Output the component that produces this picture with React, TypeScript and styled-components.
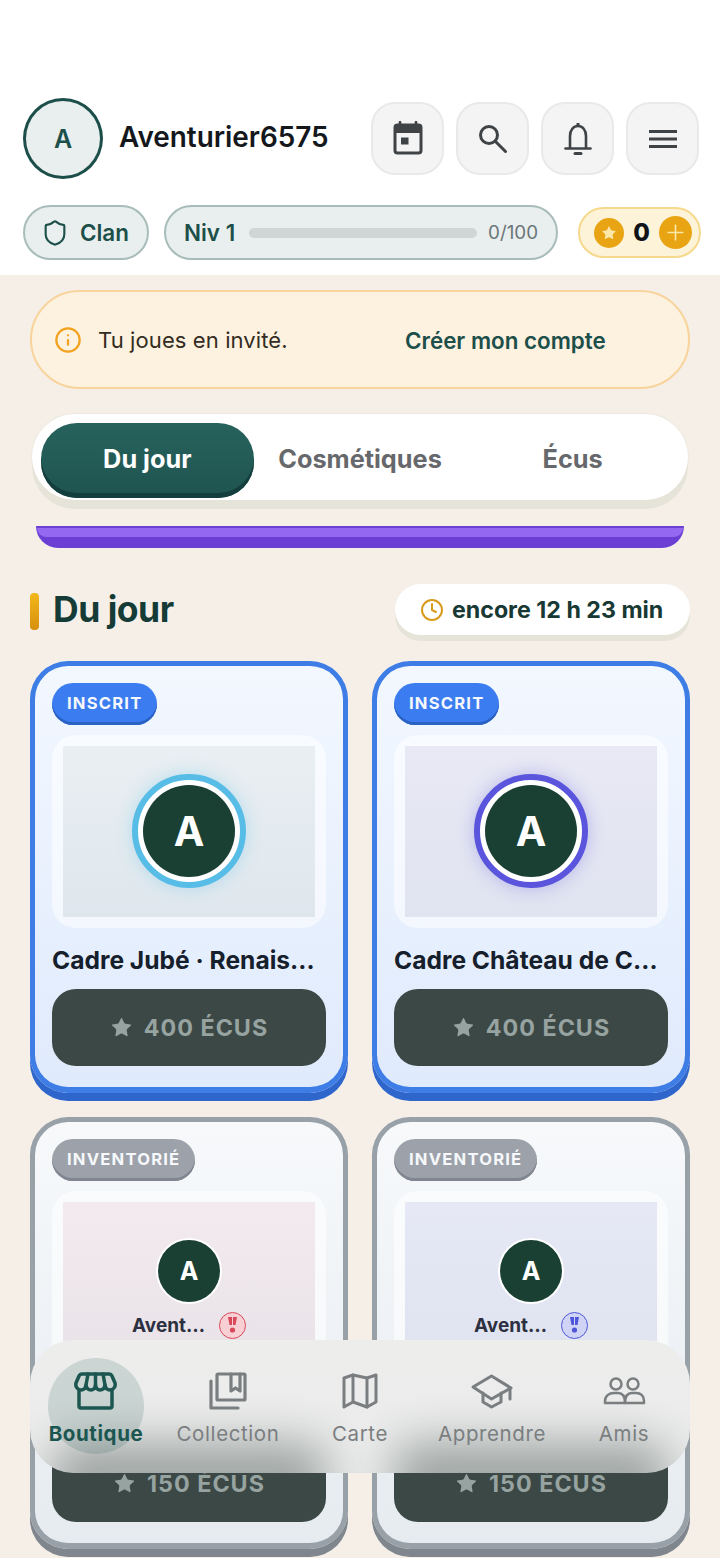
import styled, { createGlobalStyle } from "styled-components";
import { Shield, Star, Plus, Info, Clock } from "lucide-react";

const GlobalStyle = createGlobalStyle`
  html, body {
    margin: 0;
    padding: 0;
    background: #f5efe8;
    font-family: Inter, "Noto Sans", sans-serif;
  }
  * { box-sizing: border-box; }
  #root { height: 1558px; overflow: hidden; }
`;

const Page = styled.div`
  position: relative;
  width: 720px;
  height: 1558px;
  overflow: hidden;
  background: #f5efe8;
`;

const Header = styled.header`
  background: #fff;
  height: 275px;
  padding: 98px 19px 0 23px;
  display: flex;
  flex-direction: column;
  gap: 26px;
`;

const TopRow = styled.div`
  display: flex;
  align-items: center;
  height: 81px;
  padding-right: 2px;
`;

const Avatar = styled.div`
  width: 80px;
  height: 81px;
  border-radius: 50%;
  border: 3px solid #1c4f49;
  background: #e9eeee;
  color: #1c4f49;
  display: flex;
  align-items: center;
  justify-content: center;
  font-size: 25px;
  font-weight: 600;
`;

const UserName = styled.div`
  margin-left: 16px;
  font-size: 27.9px;
  font-weight: 600;
  color: #14181c;
  flex: 1;
  margin-top: -3px;
`;

const IconButtons = styled.div`
  display: flex;
  gap: 12px;
`;

const IconButton = styled.div`
  width: 73px;
  height: 73px;
  border-radius: 24px;
  background: #f4f4f4;
  border: 2px solid #e9e9e9;
  display: flex;
  align-items: center;
  justify-content: center;
  color: #3f4345;
`;

const StatusRow = styled.div`
  display: flex;
  align-items: center;
`;

const Pill = styled.div`
  height: 55px;
  border-radius: 28px;
  background: #e9eeee;
  border: 2px solid #a8bdb9;
  display: flex;
  align-items: center;
  color: #1c4f49;
  font-size: 22.4px;
  font-weight: 600;
`;

const ClanPill = styled(Pill)`
  width: 126px;
  padding-left: 16px;
  gap: 11px;
`;

const LevelPill = styled(Pill)`
  width: 394px;
  margin-left: 15px;
  padding: 0 18px;
`;

const Track = styled.div`
  flex: 1;
  height: 10px;
  border-radius: 5px;
  background: #cfd6d6;
  margin: 0 11px 0 14px;
`;

const LevelCount = styled.span`
  font-size: 18.8px;
  font-weight: 400;
  color: #6c7678;
`;

const CoinPill = styled.div`
  margin-left: 20px;
  width: 123px;
  height: 51px;
  border-radius: 26px;
  background: #fdf3d8;
  border: 2px solid #f6d98c;
  display: flex;
  align-items: center;
  justify-content: space-between;
  padding: 0 7px 0 14px;
  font-size: 24px;
  font-weight: 800;
  color: #101418;
`;

const CoinDot = styled.span<{ $size: number }>`
  width: ${(p) => p.$size}px;
  height: ${(p) => p.$size}px;
  border-radius: 50%;
  background: #e8a412;
  display: flex;
  align-items: center;
  justify-content: center;
  color: #fbe7a8;
`;

const Content = styled.main`
  padding: 15px 30px 0;
`;

const Banner = styled.div`
  height: 99px;
  border-radius: 50px;
  background: #fdf1df;
  border: 2px solid #f8d49c;
  display: flex;
  align-items: center;
  padding: 1px 0 0 22px;
  color: #f3a21f;
`;

const BannerText = styled.span`
  margin-left: 16px;
  font-size: 22px;
  font-weight: 400;
  letter-spacing: 0.1px;
  color: #332c22;
  width: 307px;
`;

const BannerLink = styled.span`
  font-size: 22.4px;
  font-weight: 600;
  color: #1c4f49;
`;

const Tabs = styled.div`
  margin: 25px 2px 0;
  height: 86px;
  border-radius: 43px;
  background: #fff;
  box-shadow: 0 9px 0 #e6e4d8, 0 0 0 1px #ece9e0;
  display: flex;
  padding: 9px;
`;

const Tab = styled.div<{ $active?: boolean }>`
  flex: 1;
  height: 75px;
  padding-bottom: 4px;
  border-radius: 36px;
  display: flex;
  align-items: center;
  justify-content: center;
  font-size: 25.3px;
  font-weight: 700;
  color: ${(p) => (p.$active ? "#fff" : "#66686b")};
  background: ${(p) => (p.$active ? "linear-gradient(#27625d, #1f5450)" : "transparent")};
  box-shadow: ${(p) => (p.$active ? "inset 0 -5px 0 #143e3d" : "none")};
`;

const PurpleStrip = styled.div`
  margin: 26px 6px 0;
  height: 22px;
  background: #6c3fd4;
  border-radius: 0 0 24px 24px;
  overflow: hidden;
  padding: 2px 1px 0;
`;

const PurpleGlow = styled.div`
  height: 9px;
  background: #9468f0;
  border-radius: 0 0 18px 18px;
`;

const SectionHead = styled.div`
  margin-top: 33px;
  height: 57px;
  display: flex;
  align-items: center;
  justify-content: space-between;
`;

const SectionTitle = styled.h2`
  margin: 0;
  display: flex;
  align-items: center;
  gap: 14px;
  font-size: 35.5px;
  font-weight: 700;
  letter-spacing: -0.5px;
  color: #153b36;
`;

const TitleBar = styled.span`
  width: 9px;
  height: 37px;
  margin-top: 4px;
  border-radius: 4px;
  background: linear-gradient(#f3b81c, #d78f0c);
`;

const Timer = styled.div`
  width: 295px;
  height: 51px;
  border-radius: 26px;
  background: #fff;
  box-shadow: 0 6px 0 #e6e4d8;
  display: flex;
  align-items: center;
  gap: 8px;
  padding-left: 25px;
  font-size: 23.2px;
  font-weight: 700;
  color: #173833;
`;

const Grid = styled.div`
  margin-top: 23px;
  display: grid;
  grid-template-columns: 318px 318px;
  column-gap: 24px;
  row-gap: 24px;
`;

const Card = styled.article<{ $tone: "blue" | "grey" }>`
  height: 432px;
  border-radius: 38px;
  border: 5px solid ${(p) => (p.$tone === "blue" ? "#3d7de5" : "#98a0a8")};
  border-bottom-width: 6px;
  padding: 17px 17px 0;
  background: ${(p) =>
    p.$tone === "blue"
      ? "linear-gradient(#f3f8ff, #dfeafc)"
      : "linear-gradient(#f7f9fb, #e6ebf0)"};
  box-shadow: 0 8px 0 ${(p) => (p.$tone === "blue" ? "#2f66cc" : "#7f868e")};
  overflow: hidden;
`;

const Badge = styled.div<{ $tone: "blue" | "grey" }>`
  display: flex;
  width: fit-content;
  align-items: center;
  height: 42px;
  border-radius: 21px;
  padding: 0 15px 3px;
  font-size: 16.6px;
  font-weight: 700;
  letter-spacing: 1.2px;
  color: #f6f8fb;
  background: ${(p) => (p.$tone === "blue" ? "#3b7df0" : "#9da2aa")};
  box-shadow: inset 0 -3px 0 ${(p) => (p.$tone === "blue" ? "#2a62c4" : "#7f8690")};
`;

const PreviewFrame = styled.div`
  margin-top: 10px;
  height: 193px;
  border-radius: 24px;
  background: rgba(255, 255, 255, 0.55);
  padding: 11px;
`;

const Preview = styled.div<{ $from: string; $to: string }>`
  height: 171px;
  padding-bottom: 1px;
  background: linear-gradient(${(p) => p.$from}, ${(p) => p.$to});
  display: flex;
  flex-direction: column;
  align-items: center;
  justify-content: center;
`;

const FramedAvatar = styled.div<{ $ring: string }>`
  width: 114px;
  height: 114px;
  border-radius: 50%;
  background: #fff;
  border: 6px solid ${(p) => p.$ring};
  box-shadow: 0 0 18px ${(p) => p.$ring}55;
  display: flex;
  align-items: center;
  justify-content: center;
`;

const AvatarDisc = styled.div<{ $size: number; $font: number }>`
  width: ${(p) => p.$size}px;
  height: ${(p) => p.$size}px;
  border-radius: 50%;
  background: #1a3f33;
  color: #fff;
  display: flex;
  align-items: center;
  justify-content: center;
  font-size: ${(p) => p.$font}px;
  font-weight: 700;
`;

const SmallAvatar = styled.div`
  margin-top: 2px;
  padding: 2px;
  border-radius: 50%;
  background: #fff;
`;

const NameRow = styled.div`
  margin-top: 8px;
  display: flex;
  align-items: center;
  gap: 14px;
  font-size: 19px;
  font-weight: 700;
  color: #2c2f40;
`;

const Medal = styled.span<{ $color: string; $fill: string }>`
  width: 27px;
  height: 27px;
  border-radius: 50%;
  border: 1.5px solid ${(p) => p.$color};
  background: ${(p) => p.$fill};
  color: ${(p) => p.$color};
  display: flex;
  align-items: center;
  justify-content: center;
`;

const CardTitle = styled.div`
  margin-top: 17px;
  font-size: 24.6px;
  line-height: 30px;
  font-weight: 700;
  color: #16202c;
  white-space: nowrap;
`;

const PriceButton = styled.div`
  margin-top: 14px;
  height: 77px;
  border-radius: 24px;
  background: #3c4845;
  color: #97a3a0;
  display: flex;
  align-items: center;
  justify-content: center;
  gap: 11px;
  font-size: 23.3px;
  font-weight: 700;
  letter-spacing: 1px;
`;

const BottomNav = styled.nav`
  position: absolute;
  left: 30px;
  top: 1340px;
  width: 660px;
  height: 133px;
  border-radius: 44px;
  background: linear-gradient(#edeeec, #e9eaea);
  overflow: hidden;
  display: grid;
  grid-template-columns: repeat(5, 132px);
`;

/* the dark price buttons seen through the frosted bar */
const NavShade = styled.span<{ $left: number }>`
  position: absolute;
  left: ${(p) => p.$left}px;
  top: 102px;
  width: 274px;
  height: 70px;
  border-radius: 24px;
  background: #3c4845;
  opacity: 0.42;
  filter: blur(22px);
`;

const NavItem = styled.div<{ $active?: boolean }>`
  position: relative;
  display: flex;
  flex-direction: column;
  align-items: center;
  padding-top: 28px;
  gap: 9px;
  color: ${(p) => (p.$active ? "#1c5650" : "#7a7e80")};
  font-size: 20.5px;
  font-weight: ${(p) => (p.$active ? 700 : 400)};
  letter-spacing: 0.6px;
`;

const NavGlow = styled.span`
  position: absolute;
  left: 18px;
  top: 18px;
  width: 96px;
  height: 96px;
  border-radius: 50%;
  background: rgba(28, 86, 80, 0.16);
`;

const NavIcon = styled.svg`
  position: relative;
  width: 44px;
  height: 44px;
  fill: none;
  stroke: currentColor;
  stroke-linejoin: round;
  stroke-linecap: round;
`;

const NavLabel = styled.span`
  position: relative;
`;

const items = [
  {
    tone: "blue" as const,
    badge: "INSCRIT",
    ring: "#58bde6",
    from: "#e9eff2",
    to: "#dfe7ee",
    title: "Cadre Jubé · Renais…",
    price: "400 ÉCUS",
  },
  {
    tone: "blue" as const,
    badge: "INSCRIT",
    ring: "#5a55dc",
    from: "#e9e9f5",
    to: "#e0e3f0",
    title: "Cadre Château de C…",
    price: "400 ÉCUS",
  },
  {
    tone: "grey" as const,
    badge: "INVENTORIÉ",
    from: "#f2eaee",
    to: "#e8e2e8",
    medal: ["#d9475a", "#f8d0d4"],
    title: "",
    price: "150 ÉCUS",
  },
  {
    tone: "grey" as const,
    badge: "INVENTORIÉ",
    from: "#e6e8f5",
    to: "#dfe2ef",
    medal: ["#4f55d8", "#cfd4f6"],
    title: "",
    price: "150 ÉCUS",
  },
];

const App = () => {
  return (
    <Page>
      <GlobalStyle />
      <Header>
        <TopRow>
          <Avatar>A</Avatar>
          <UserName>Aventurier6575</UserName>
          <IconButtons>
            <IconButton>
              <svg width="34" height="36" viewBox="0 0 34 36">
                <path d="M9 1v5M25 1v5" stroke="#3f4345" strokeWidth="2.6" strokeLinecap="round" />
                <rect x="4" y="4" width="26" height="28" rx="2.5" fill="none" stroke="#3f4345" strokeWidth="3" />
                <rect x="4" y="4" width="26" height="8" fill="#3f4345" />
                <rect x="10" y="16.5" width="7.5" height="7" fill="#3f4345" />
              </svg>
            </IconButton>
            <IconButton>
              <svg width="30" height="30" viewBox="0 0 30 30" fill="none" stroke="#3f4345" strokeWidth="3">
                <circle cx="11" cy="11" r="8.5" />
                <path d="M17.5 17.5L27.5 27.5" strokeLinecap="round" />
              </svg>
            </IconButton>
            <IconButton>
              <svg width="30" height="34" viewBox="0 0 30 34" fill="none" stroke="#3f4345" strokeWidth="2.6" strokeLinejoin="round">
                <path d="M15 1v3" strokeWidth="3" />
                <path d="M7 26V14c0-6 3.5-10 8-10s8 4 8 10v12" />
                <path d="M2.5 26.5h25" strokeLinecap="round" />
                <path d="M12 31.5h6" strokeWidth="3" strokeLinecap="round" />
              </svg>
            </IconButton>
            <IconButton>
              <svg width="30" height="20" viewBox="0 0 30 20" stroke="#3f4345" strokeWidth="3">
                <path d="M1 2.5h28M1 10h28M1 17.5h28" />
              </svg>
            </IconButton>
          </IconButtons>
        </TopRow>
        <StatusRow>
          <ClanPill>
            <Shield size={28} strokeWidth={1.8} />
            Clan
          </ClanPill>
          <LevelPill>
            Niv 1
            <Track />
            <LevelCount>0/100</LevelCount>
          </LevelPill>
          <CoinPill>
            <CoinDot $size={30}>
              <Star size={16} fill="currentColor" stroke="none" />
            </CoinDot>
            0
            <CoinDot $size={33}>
              <Plus size={25} strokeWidth={1.6} />
            </CoinDot>
          </CoinPill>
        </StatusRow>
      </Header>

      <Content>
        <Banner>
          <Info size={28} strokeWidth={1.9} />
          <BannerText>Tu joues en invité.</BannerText>
          <BannerLink>Créer mon compte</BannerLink>
        </Banner>

        <Tabs>
          <Tab $active>Du jour</Tab>
          <Tab>Cosmétiques</Tab>
          <Tab>Écus</Tab>
        </Tabs>

        <PurpleStrip>
          <PurpleGlow />
        </PurpleStrip>

        <SectionHead>
          <SectionTitle>
            <TitleBar />
            Du jour
          </SectionTitle>
          <Timer>
            <Clock size={24} color="#d89b1c" strokeWidth={2} />
            encore 12 h 23 min
          </Timer>
        </SectionHead>

        <Grid>
          {items.map((item, i) => (
            <Card key={i} $tone={item.tone}>
              <Badge $tone={item.tone}>{item.badge}</Badge>
              <PreviewFrame>
                <Preview $from={item.from} $to={item.to}>
                  {item.ring ? (
                    <FramedAvatar $ring={item.ring}>
                      <AvatarDisc $size={92} $font={41}>A</AvatarDisc>
                    </FramedAvatar>
                  ) : (
                    <>
                      <SmallAvatar>
                        <AvatarDisc $size={62} $font={25}>A</AvatarDisc>
                      </SmallAvatar>
                      <NameRow>
                        Avent…
                        <Medal $color={item.medal![0]} $fill={item.medal![1]}>
                          <svg width="11" height="17" viewBox="0 0 11 17">
                            <path d="M1 0h4v8H2.500zM6 0h4L8.500 8H6z" fill="currentColor" />
                            <circle cx="5.5" cy="13" r="2.6" fill="currentColor" />
                          </svg>
                        </Medal>
                      </NameRow>
                    </>
                  )}
                </Preview>
              </PreviewFrame>
              <CardTitle>{item.title || "\u00a0"}</CardTitle>
              <PriceButton>
                <Star size={23} fill="currentColor" stroke="none" />
                {item.price}
              </PriceButton>
            </Card>
          ))}
        </Grid>
      </Content>

      <BottomNav>
        <NavShade $left={22} />
        <NavShade $left={364} />
        <NavItem $active>
          <NavGlow />
          <NavIcon viewBox="0 0 44 44" strokeWidth={3.5}>
            <path d="M8 6H35Q37 6 38 8L41 15C42 19 39 22 36 22C33 22 31.5 20 31 17C30.5 20 29 22 26 22C23 22 22 20 21.5 17C21 20 20 22 17 22C14 22 12.5 20 12 17C11.5 20 10 22 7 22C4 22 1 19 2 15L5 8Q6 6 8 6Z" />
            <path d="M12 17L14 6M21.5 17V6M31 17L29 6" />
            <path d="M5 22V38a2 2 0 0 0 2 2H36a2 2 0 0 0 2-2V22" />
          </NavIcon>
          <NavLabel>Boutique</NavLabel>
        </NavItem>
        <NavItem>
          <NavIcon viewBox="0 0 44 44" strokeWidth={3.2}>
            <rect x="11" y="6" width="28" height="26" rx="1" />
            <path d="M25 6v17l4.500-3 4.500 3V6" />
            <path d="M5 13v27h27" />
          </NavIcon>
          <NavLabel>Collection</NavLabel>
        </NavItem>
        <NavItem>
          <NavIcon viewBox="0 0 44 44" strokeWidth={3}>
            <path d="M6 10L15 7L29 10L38 7V34L29 39L15 34L6 39Z" />
            <path d="M15 7V34M29 10V39" />
          </NavIcon>
          <NavLabel>Carte</NavLabel>
        </NavItem>
        <NavItem>
          <NavIcon viewBox="0 0 44 44" strokeWidth={3}>
            <path d="M3 19L21.5 8L41 20L21.5 31Z" />
            <path d="M13 25V34L21.5 39L31 34V25" />
            <path d="M40 20V31" />
          </NavIcon>
          <NavLabel>Apprendre</NavLabel>
        </NavItem>
        <NavItem>
          <NavIcon viewBox="0 0 44 44" strokeWidth={2.5}>
            <circle cx="14" cy="16" r="5.5" />
            <circle cx="31" cy="16" r="5.5" />
            <path d="M3 35v-2c0-5 4-8 9-8h4c5 0 7 3 7 10z" />
            <path d="M23 35c0-7 2-10 7-10h4c5 0 8 3 8 8v2z" />
          </NavIcon>
          <NavLabel>Amis</NavLabel>
        </NavItem>
      </BottomNav>
    </Page>
  );
};

export default App;
